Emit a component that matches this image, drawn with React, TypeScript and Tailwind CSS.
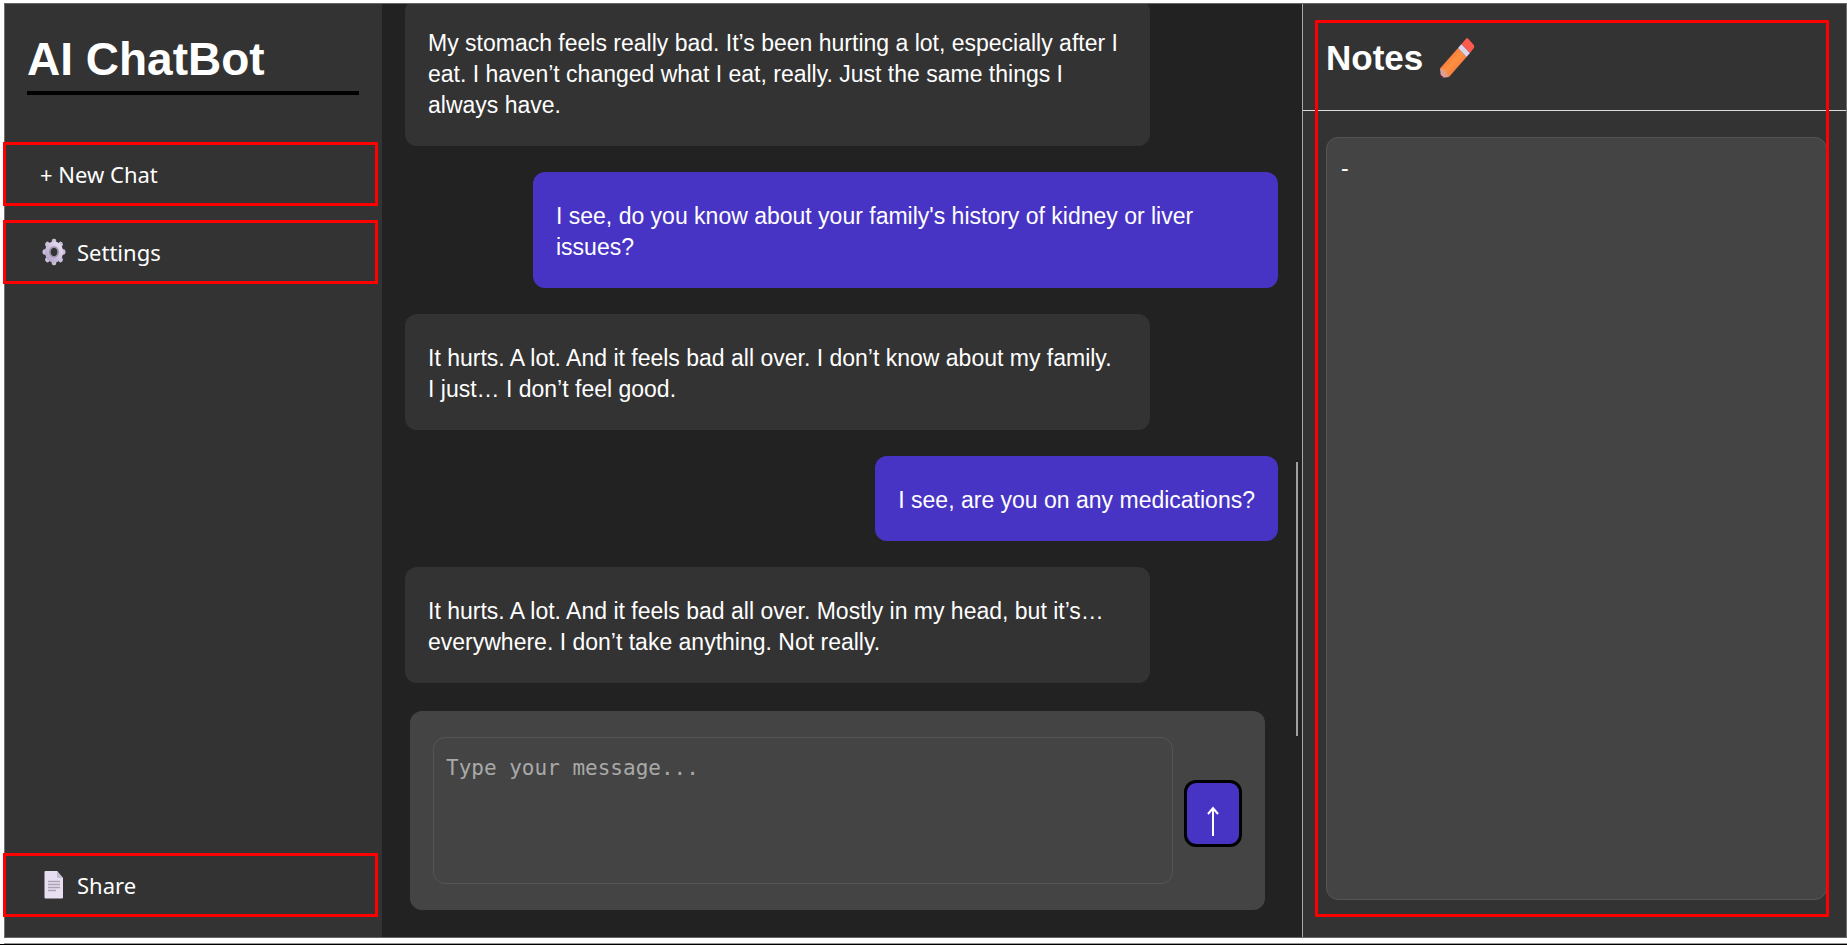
import { useState } from "react";

type Message = { id: number; from: "patient" | "doctor"; text: string };

const messages: Message[] = [
  {
    id: 1,
    from: "patient",
    text: "My stomach feels really bad. It’s been hurting a lot, especially after I eat. I haven’t changed what I eat, really. Just the same things I always have.",
  },
  { id: 2, from: "doctor", text: "I see, do you know about your family's history of kidney or liver issues?" },
  {
    id: 3,
    from: "patient",
    text: "It hurts. A lot. And it feels bad all over. I don’t know about my family. I\u00a0just… I don’t feel good.",
  },
  { id: 4, from: "doctor", text: "I see, are you on any medications?" },
  {
    id: 5,
    from: "patient",
    text: "It hurts. A lot. And it feels bad all over. Mostly in my head, but it’s… everywhere. I don’t take anything. Not really.",
  },
];

function GearIcon() {
  const teeth = [0, 45, 90, 135, 180, 225, 270, 315];
  return (
    <svg viewBox="0 0 24 28" className="h-7 w-6" aria-hidden="true">
      <defs>
        <linearGradient id="gear" x1="1" y1="0" x2="0" y2="1">
          <stop offset="0" stopColor="#e6dcf0" />
          <stop offset="1" stopColor="#b5a6cb" />
        </linearGradient>
      </defs>
      <g transform="translate(12 14) scale(1 1.16)">
        {teeth.map((a) => (
          <rect key={a} x="-2.3" y="-11.5" width="4.6" height="6" rx="2" fill="#cabfda" transform={`rotate(${a})`} />
        ))}
        <circle r="6.4" fill="none" stroke="url(#gear)" strokeWidth="5.4" />
        <circle r="4.3" fill="none" stroke="#9a8fac" strokeWidth="1.4" />
      </g>
    </svg>
  );
}

function PageIcon() {
  return (
    <svg viewBox="0 0 20 28" className="h-7 w-5" aria-hidden="true">
      <path d="M1.5 0H13l6 7v19.5a1 1 0 0 1-1 1H1.5a1 1 0 0 1-1-1V1a1 1 0 0 1 1-1Z" fill="#e7dff1" />
      <path d="M13 0l6 7h-5a1 1 0 0 1-1-1Z" fill="#c6bdd2" />
      <path d="M4 10.5h12M4 13.500h12M4 16.500h12M4 19.500h8" stroke="#aaa2b5" strokeWidth="1.4" />
    </svg>
  );
}

function PencilIcon() {
  return (
    <svg viewBox="0 0 36 42" className="h-[42px] w-9" aria-hidden="true">
      <defs>
        <linearGradient id="wood" x1="0" y1="0" x2="1" y2="1">
          <stop offset="0.1" stopColor="#f4623a" />
          <stop offset="0.5" stopColor="#ff9040" />
          <stop offset="0.9" stopColor="#ee6c3c" />
        </linearGradient>
      </defs>
      <path d="M1 31.500 19 11l8.500 9L10 40Z" fill="url(#wood)" />
      <path d="M1 31.500 5 32.500 10 40 2 41Z" fill="#dc9f90" />
      <path d="M1 37.500 5 40.600 2 41Z" fill="#4b1447" />
      <path d="M19 11 22.500 7l8.500 9-3.500 4Z" fill="#dcd5ea" />
      <path d="M22.500 7 27 1.700q1-1.200 2.200 0l5.600 6.300q1.200 1.500 0 3L31 16Z" fill="#fb5a4c" />
    </svg>
  );
}

const navButton =
  "flex h-16 w-[375px] items-center border-3 border-[#ff0000] text-left font-['Noto_Sans','Open_Sans',sans-serif] text-[22px] leading-7 text-white";

function Sidebar() {
  return (
    <aside className="flex w-[378px] shrink-0 flex-col border-l border-[#707070] bg-[#333333] pb-5">
      <h1 className="mr-[23px] ml-[22px] border-b-4 border-black pt-[27px] pb-1 text-[46px] leading-14 font-bold text-white">
        AI ChatBot
      </h1>
      <nav className="-ml-0.5 flex flex-1 flex-col pt-[47px]" aria-label="Chat menu">
        <button type="button" className={`${navButton} pl-[34px]`}>
          + New Chat
        </button>
        <button type="button" className={`${navButton} mt-3.5 gap-[11px] pl-9`}>
          <GearIcon />
          Settings
        </button>
        <button type="button" className={`${navButton} mt-auto gap-[13px] pl-[38px]`}>
          <PageIcon />
          Share
        </button>
      </nav>
    </aside>
  );
}

function Bubble({ message }: { message: Message }) {
  const doctor = message.from === "doctor";
  return (
    <li
      className={`max-w-[745px] rounded-xl px-[23px] pt-[29px] pb-[25px] text-[23px] leading-[31px] text-white ${
        doctor ? "self-end bg-[#4834c4]" : "self-start bg-[#333333]"
      }`}
    >
      {message.text}
    </li>
  );
}

function Conversation() {
  const [draft, setDraft] = useState("");
  return (
    <main className="relative flex min-w-0 flex-1 flex-col bg-[#222222] pb-[27px]">
      <ol className="flex min-h-0 flex-1 flex-col justify-end gap-[26px] overflow-hidden pr-6 pl-[23px]">
        {messages.map((m) => (
          <Bubble key={m.id} message={m} />
        ))}
      </ol>
      <div className="absolute top-[458px] right-1 h-[274px] w-0.5 bg-[#a0a0a0]" />
      <form
        className="mt-7 mr-[37px] ml-7 flex items-center gap-[11px] rounded-xl bg-[#444444] px-[23px] py-[26px]"
        onSubmit={(e) => e.preventDefault()}
      >
        <textarea
          aria-label="Message"
          placeholder="Type your message..."
          value={draft}
          onChange={(e) => setDraft(e.target.value)}
          className="h-[147px] min-w-0 flex-1 resize-none rounded-xl border border-[#555555] bg-transparent px-3 py-4 font-['DejaVu_Sans_Mono',monospace] text-[21px] leading-7 text-white outline-none placeholder:text-[#a9a9a9]"
        />
        <button
          type="submit"
          aria-label="Send"
          className="mt-1.5 flex h-[67px] w-[58px] items-center justify-center rounded-xl border-3 border-black bg-[#4834c4] pt-3.5"
        >
          <svg viewBox="0 0 12 30" className="h-[30px] w-3" fill="none" stroke="#ffffff" strokeWidth="2" aria-hidden="true">
            <path d="M6 30V2M1 8l5-6 5 6" />
          </svg>
        </button>
      </form>
    </main>
  );
}

function Notes() {
  const [notes, setNotes] = useState("-");
  return (
    <aside className="relative flex w-[545px] shrink-0 flex-col border-r border-l border-r-[#707070] border-l-[#a8a8a8] bg-[#333333]">
      <h2 className="flex h-[107px] items-center gap-4 border-b border-[#dddddd] pt-0.5 pl-[23px] text-[35px] leading-10 font-bold text-white">
        <label htmlFor="notes">Notes</label>
        <PencilIcon />
      </h2>
      <textarea
        id="notes"
        value={notes}
        onChange={(e) => setNotes(e.target.value)}
        className="mt-[26px] mr-[19px] mb-[37px] ml-[23px] flex-1 resize-none rounded-xl border border-[#555555] bg-[#444444] px-3.5 py-4 text-[23px] leading-7 text-white outline-none"
      />
      <div className="pointer-events-none absolute top-4 right-[17px] bottom-5 left-3 border-3 border-[#ff0000]" />
    </aside>
  );
}

export default function App() {
  return (
    <div className="flex h-screen flex-col border-b border-black bg-white pt-[3px] pl-1 font-['Liberation_Sans',Arial,sans-serif]">
      <div className="flex min-h-0 flex-1 border-y border-[#666666]">
        <Sidebar />
        <Conversation />
        <Notes />
      </div>
      <div className="h-1.5 shrink-0 border-b border-[#999999]" />
    </div>
  );
}
